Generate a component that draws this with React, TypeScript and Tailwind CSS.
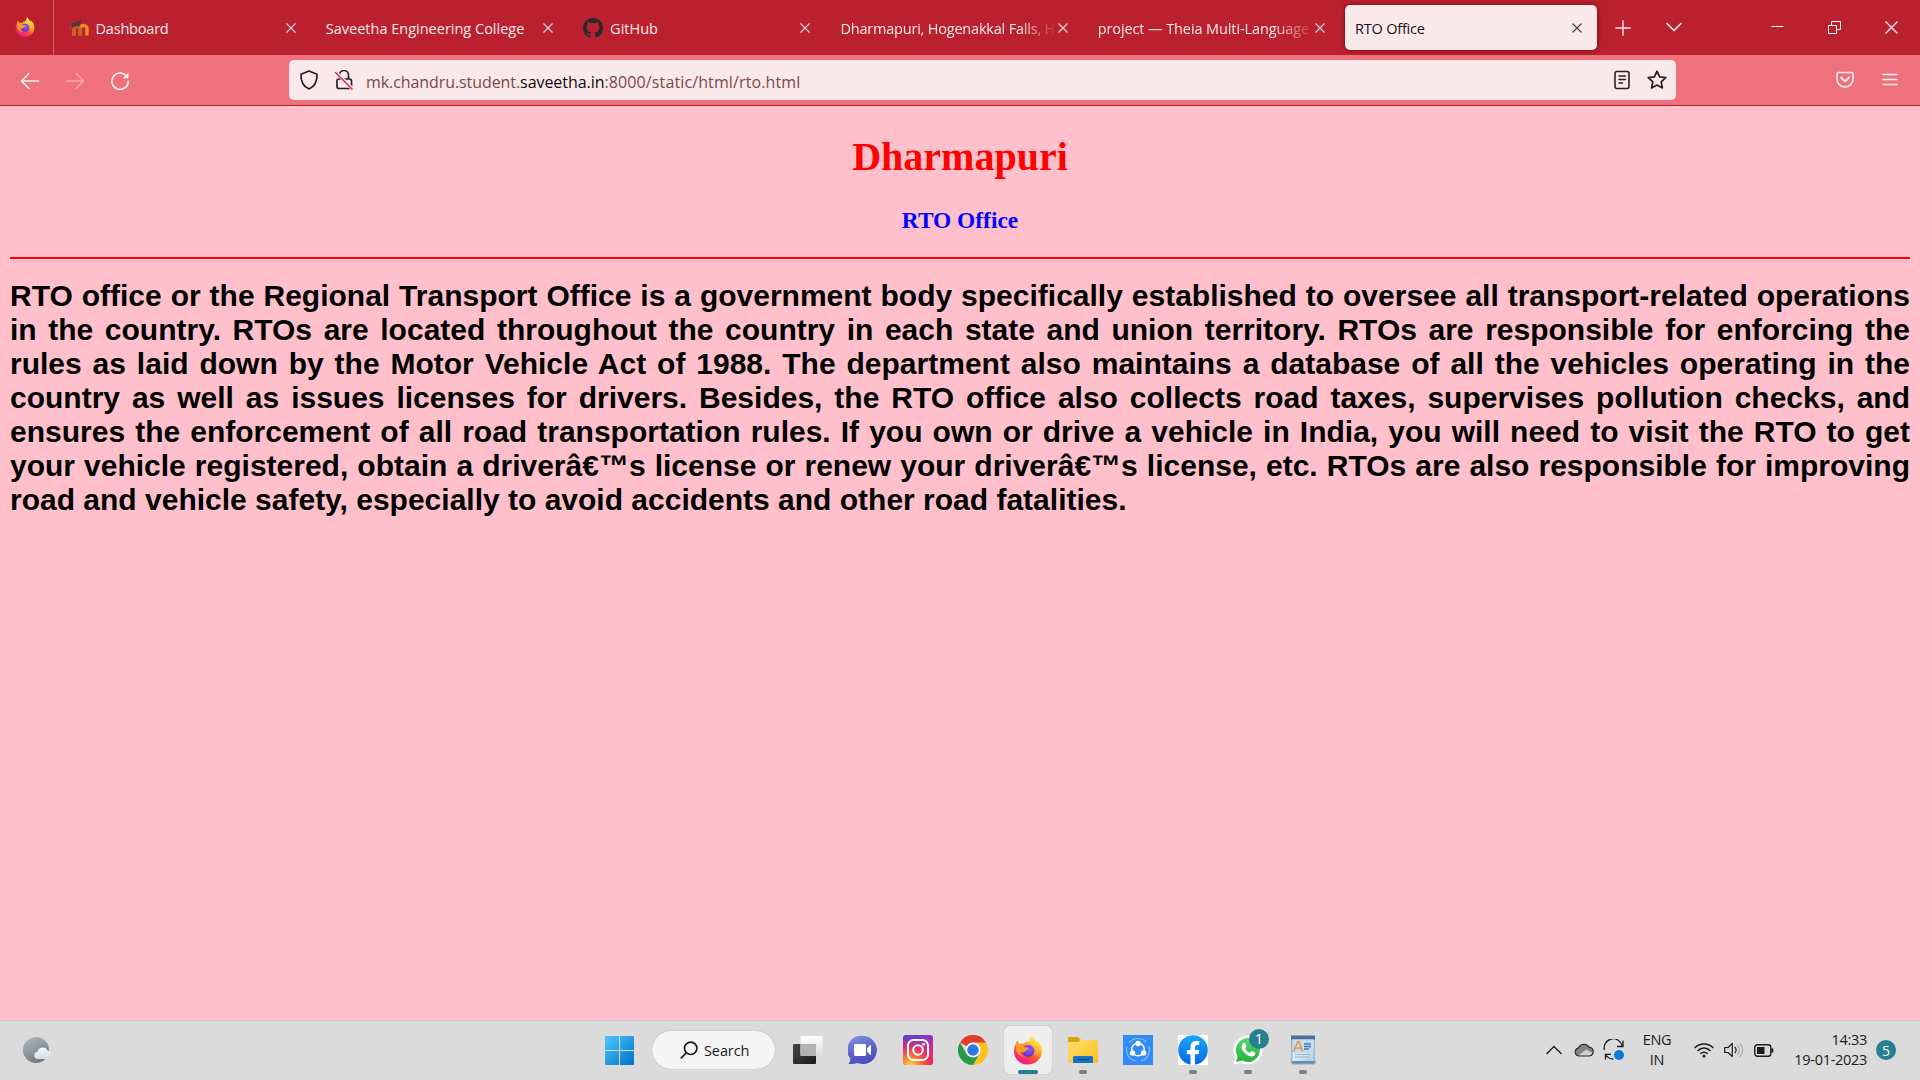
import React from "react";

type IconProps = { children: React.ReactNode; className?: string; box?: string };

function Glyph({ children, className = "size-5", box = "0 0 20 20" }: IconProps) {
  return (
    <svg viewBox={box} className={`shrink-0 ${className}`} fill="none" stroke="currentColor" strokeWidth={1.4} strokeLinecap="round" strokeLinejoin="round">
      {children}
    </svg>
  );
}

function Firefox({ id, className }: { id: string; className: string }) {
  return (
    <svg viewBox="0 0 30 30" className={`shrink-0 ${className}`}>
      <defs>
        <linearGradient id={`${id}a`} x1="0.8" y1="0.1" x2="0.25" y2="0.95">
          <stop offset="0" stopColor="#fff44f" />
          <stop offset="0.35" stopColor="#ffa52a" />
          <stop offset="0.65" stopColor="#ff4a3c" />
          <stop offset="1" stopColor="#e8178f" />
        </linearGradient>
        <radialGradient id={`${id}b`} cx="0.55" cy="0.35" r="0.7">
          <stop offset="0" stopColor="#9059ff" />
          <stop offset="1" stopColor="#5b2fc4" />
        </radialGradient>
        <linearGradient id={`${id}c`} x1="0.5" y1="0" x2="0.5" y2="1">
          <stop offset="0" stopColor="#fff04c" />
          <stop offset="1" stopColor="#ffa21f" />
        </linearGradient>
      </defs>
      <path fill={`url(#${id}a)`} d="M4.500 5.500c.3 1.600 1 2.700 1.800 3.400 1.300-.4 2.700-.3 4 .2C12.500 6.500 15 6 17 6.200c-.8-2 .2-4.500 1.800-5.700.5 3 3.200 4.700 4.800 6.700.3-.6.3-1.200.2-1.800 3.400 2.600 5.400 7 5.200 11.200C28.700 24 22.500 29.600 15 29.600S1 24 1 16.200c0-2.700.8-4.800 1.500-6.200.3-1.700 1-3.300 2-4.500z" />
      <circle cx="15.300" cy="16" r="6" fill={`url(#${id}b)`} />
      <path fill={`url(#${id}c)`} d="M18.800.5c.5 3 3.200 4.700 4.800 6.700 3 3.800 3.300 9.300.6 13.400.4-4.200-1-7.700-4.200-10.200C17.200 8.300 16.200 4 18.800.5z" />
      <path fill="#ff9a26" d="M4.500 5.500c.3 1.600 1 2.700 1.800 3.400 1.300-.4 2.700-.3 4 .2-.4 1.100-.3 2.100.2 2.900 1.600.4 3.800.2 5 .7.200 1.700-1.900 2.200-2.800 3-.8.900-1.200 1.700-2.900 1.600-1 0-1.800-.4-2.300-.8.200 2.900 2 5 5 5.600-5.200.5-9.300-3.500-9.500-8C2.800 11 2.900 8 4.500 5.500z" />
    </svg>
  );
}

function Moodle() {
  return (
    <svg viewBox="0 0 20 20" className="size-5 shrink-0">
      <path d="M5 17.500v-6M11.200 17.500V10.500c0-4 6.800-4 6.800 0v7" fill="none" stroke="#f08a24" strokeWidth="3.400" />
      <path d="M5 17.500v-6c0-3 6.200-3.500 6.200-.5v6.500" fill="none" stroke="#c8602c" strokeWidth="2.800" />
      <path d="M2 6 12.500 2 10 8.500C8 7.500 6 7.800 4.500 9.300z" fill="#4b3a3a" />
      <path d="M2 6.300c-1 2-.8 3.500-.6 5" stroke="#a55a55" fill="none" strokeWidth=".7" />
    </svg>
  );
}

function GitHub() {
  return (
    <svg viewBox="0 0 16 16" className="size-5 shrink-0" fill="#24292f">
      <path d="M8 0C3.580 0 0 3.580 0 8c0 3.540 2.290 6.530 5.470 7.590.4.070.55-.17.55-.38 0-.19-.01-.82-.01-1.490-2.010.37-2.530-.49-2.690-.94-.09-.23-.48-.94-.82-1.130-.28-.15-.68-.52-.01-.53.63-.01 1.080.58 1.230.82.72 1.210 1.870.87 2.330.66.070-.52.28-.87.51-1.070-1.780-.2-3.640-.89-3.640-3.950 0-.87.31-1.590.82-2.150-.08-.2-.36-1.020.08-2.120 0 0 .67-.21 2.200.82.640-.18 1.320-.27 2-.27s1.360.09 2 .27c1.530-1.040 2.200-.82 2.200-.82.44 1.100.16 1.920.08 2.120.51.56.82 1.270.82 2.150 0 3.070-1.870 3.750-3.650 3.950.29.25.54.73.54 1.480 0 1.070-.01 1.930-.01 2.200 0 .21.15.46.55.38A8.010 8.010 0 0 0 16 8c0-4.420-3.580-8-8-8z" />
    </svg>
  );
}

function CloseX({ className = "" }: { className?: string }) {
  return (
    <svg viewBox="0 0 10 10" className={`size-2.5 shrink-0 ${className}`} stroke="currentColor" strokeWidth="1.200">
      <path d="M.5.500l9 9M9.500.500l-9 9" />
    </svg>
  );
}

type Tab = { title: string; icon?: React.ReactNode; active?: boolean; fade?: boolean; spacing: string };

const tabs: Tab[] = [
  { title: "Dashboard", icon: <Moodle />, spacing: "tracking-[-0.2px]" },
  { title: "Saveetha Engineering College", spacing: "tracking-normal" },
  { title: "GitHub", icon: <GitHub />, spacing: "tracking-normal" },
  { title: "Dharmapuri, Hogenakkal Falls, H", fade: true, spacing: "tracking-[-0.2px]" },
  { title: "project — Theia Multi-Language", fade: true, spacing: "tracking-[-0.1px]" },
  { title: "RTO Office", active: true, spacing: "tracking-[-0.2px]" },
];

function TabBar() {
  return (
    <div className="flex h-[55px] bg-[#bb202e] text-[#fbe9eb]">
      <div className="flex w-[54px] shrink-0 items-center border-r border-[#d0616b] pl-[15px] pb-0.5">
        <Firefox id="ffmenu" className="size-5" />
      </div>
      <div className="ml-[2px] flex">
        {tabs.map((tab) => (
          <div key={tab.title} className="w-[257.3px] px-[2.5px] py-[5px]">
            <div className={`flex h-[45px] items-center rounded-[5px] pr-[15px] pl-[10px] ${tab.active ? "bg-[#fae9eb] text-[#15141a] shadow-[0_0_4px_rgba(60,0,8,0.7)]" : ""}`}>
              {tab.icon && <div className="mr-[7px] flex">{tab.icon}</div>}
              <div className={`min-w-0 flex-1 pt-[2px] text-[14.500px] leading-5 whitespace-nowrap ${tab.spacing} ${tab.fade ? "[mask-image:linear-gradient(to_left,transparent_0,black_40px)]" : ""}`}>
                {tab.title}
              </div>
              <CloseX className={tab.active ? "text-[#4c4346]" : "text-[#f3cfd3]"} />
            </div>
          </div>
        ))}
      </div>
      <div className="flex flex-1 items-center justify-between pr-[22px] pl-[15px]">
        <div className="flex items-center gap-[35px]">
          <Glyph className="size-4" box="0 0 16 16"><path d="M8 .8v14.400M.8 8h14.400" /></Glyph>
          <Glyph className="size-4" box="0 0 16 16"><path d="m1 3.500 7 7 7-7" strokeWidth={1.700} /></Glyph>
        </div>
        <div className="flex items-center gap-[44px] text-white">
          <svg viewBox="0 0 13 13" className="w-[13px]" stroke="currentColor"><path d="M.5 5.500h12" /></svg>
          <svg viewBox="0 0 13 13" className="w-[13px]" fill="none" stroke="currentColor"><path d="M.5 4.500h8v8h-8zM3.500 4V.500h9v8H9" /></svg>
          <svg viewBox="0 0 13 13" className="w-[13px]" stroke="currentColor" strokeWidth="1.100"><path d="m.5.500 12 12M12.500.500l-12 12" /></svg>
        </div>
      </div>
    </div>
  );
}

function Toolbar() {
  return (
    <div className="flex h-[51px] items-start border-b border-[#bb202e] bg-[#f0717e] text-[#fff0f2]">
      <div className="flex h-[50px] w-[289px] shrink-0 items-center gap-[25px] pt-px pl-[20px]">
        <Glyph><path d="M18.500 10h-17M9 2.500 1.500 10 9 17.500" strokeWidth={1.600} /></Glyph>
        <Glyph className="size-5 opacity-40"><path d="M1.500 10h17M11 2.500l7.500 7.500-7.500 7.500" strokeWidth={1.600} /></Glyph>
        <Glyph>
          <path d="M16.600 5.200a8.200 8.200 0 1 0 1.700 5.200" strokeWidth={1.700} />
          <path d="M18.500 1.500v5.700h-5.700z" fill="currentColor" stroke="none" />
        </Glyph>
      </div>
      <div className="mt-[5px] flex h-[40px] w-[1387px] shrink-0 items-center rounded-[5px] bg-[#fae9eb] pr-[9px] pl-[10px] text-[#252025]">
        <Glyph className="size-5"><path d="M10 1 18 4.200c.3 6-2 12-8 14.800-6-2.800-8.300-8.800-8-14.800z" strokeWidth={1.700} /></Glyph>
        <Glyph className="ml-[15px] size-5">
          <path d="M5.500 8.500V5a4.500 4.500 0 0 1 9 0v3.500M5 9h10.500a2 2 0 0 1 2 2v5.500a2 2 0 0 1-2 2H5a2 2 0 0 1-2-2V11a2 2 0 0 1 2-2z" strokeWidth={1.700} />
          <path d="M1.500 2 18 18.500" stroke="#fae9eb" strokeWidth={3.500} />
          <path d="M1.500 2.500 18 19" stroke="#e22850" strokeWidth={1.500} />
        </Glyph>
        <div className="ml-[12px] flex-1 pt-[3px] text-[16px] leading-6 tracking-[-0.08px] whitespace-nowrap text-[#80454d]">
          mk.chandru.student.<span className="tracking-[-0.05px] text-[#0c0a0c]">saveetha.in</span><span className="tracking-[0.12px]">:8000/static/html/rto.html</span>
        </div>
        <Glyph>
          <rect x="3" y="1.500" width="14" height="17" rx="2" strokeWidth={1.600} />
          <path d="M7 6h6.500M7 9.500h6.500M7 13h3.500" strokeWidth={1.400} />
        </Glyph>
        <Glyph className="ml-[15px] size-5"><path d="m10 1.200 2.600 5.700 6.200.7-4.600 4.200 1.200 6.200-5.400-3-5.400 3 1.200-6.200L1.200 7.600l6.200-.7z" strokeWidth={1.700} /></Glyph>
      </div>
      <div className="flex h-[50px] flex-1 items-center justify-end gap-[28px] pr-[22px]">
        <Glyph className="size-[18px]" box="0 0 18 18">
          <path d="M2.500 1.500h13a1.500 1.500 0 0 1 1.500 1.500v5a8 8 0 0 1-16 0V3a1.500 1.500 0 0 1 1.500-1.500z" strokeWidth={1.600} />
          <path d="m5 6.500 4 4 4-4" strokeWidth={1.800} />
        </Glyph>
        <Glyph className="size-4" box="0 0 16 16"><path d="M1 2.500h14M1 7.500h14M1 12.500h14" strokeWidth={1.500} /></Glyph>
      </div>
    </div>
  );
}

const lines = [
  "RTO office or the Regional Transport Office is a government body specifically established to oversee all transport-related operations",
  "in the country. RTOs are located throughout the country in each state and union territory. RTOs are responsible for enforcing the",
  "rules as laid down by the Motor Vehicle Act of 1988. The department also maintains a database of all the vehicles operating in the",
  "country as well as issues licenses for drivers. Besides, the RTO office also collects road taxes, supervises pollution checks, and",
  "ensures the enforcement of all road transportation rules. If you own or drive a vehicle in India, you will need to visit the RTO to get",
  "your vehicle registered, obtain a driverâ€™s license or renew your driverâ€™s license, etc. RTOs are also responsible for improving",
];

function Page() {
  return (
    <main className="h-[914px] bg-[#ffc0cb] px-[10px] pt-[28px] font-bold">
      <h1 className="text-center font-['Liberation_Serif',serif] text-[40px] leading-[46px] text-[#ff0000]">Dharmapuri</h1>
      <h3 className="mt-[27px] text-center font-['Liberation_Serif',serif] text-[23.400px] leading-[27px] text-[#0000ff]">RTO Office</h3>
      <hr className="mt-[23px] border-0 border-t-2 border-[#ff0000]" />
      <div className="mt-[20px] font-['Liberation_Sans',sans-serif] text-[30px] leading-[34px] text-black">
        {lines.map((line) => (
          <div key={line} className="[text-align-last:justify] whitespace-nowrap">{line}</div>
        ))}
        <div>road and vehicle safety, especially to avoid accidents and other road fatalities.</div>
      </div>
    </main>
  );
}

function Taskbar() {
  return (
    <footer className="grid h-[60px] grid-cols-[605px_1fr_auto] border-t border-[#c9c6c6] bg-[#dadbda] text-[#1c1c1c]">
      <div className="flex h-[58px] items-center pl-[22px]">
        <svg viewBox="0 0 30 28" className="w-[30px]">
          <defs>
            <linearGradient id="moon" x1="0.2" y1="0" x2="0.7" y2="1"><stop stopColor="#aeb6c0" /><stop offset="1" stopColor="#6d757f" /></linearGradient>
            <linearGradient id="mooncloud" x1="0" y1="0" x2="0" y2="1"><stop stopColor="#f6f8fa" /><stop offset="1" stopColor="#d3dae0" /></linearGradient>
          </defs>
          <circle cx="14" cy="14" r="13" fill="url(#moon)" />
          <path d="M16 23a3.600 3.600 0 0 1-.3-7.200 5.200 5.200 0 0 1 9.800-1.300A4.300 4.300 0 0 1 25.500 23z" fill="url(#mooncloud)" />
        </svg>
      </div>

      <div className="flex h-[58px] items-center">
        <svg viewBox="0 0 29 29" className="w-[29px] shrink-0">
          <defs><linearGradient id="win" x1="0" y1="0" x2="1" y2="1"><stop stopColor="#4cc9fb" /><stop offset="1" stopColor="#0070cc" /></linearGradient></defs>
          <path d="M1 0h13v14H0V1a1 1 0 0 1 1-1zM15 0h13a1 1 0 0 1 1 1v13H15zM0 15h14v14H1a1 1 0 0 1-1-1zM15 15h14v13a1 1 0 0 1-1 1H15z" fill="url(#win)" />
        </svg>
        <div className="ml-[18px] flex h-[38px] w-[123px] shrink-0 items-center rounded-full bg-[#f5f5f5] pl-[28px] shadow-[0_0_1px_rgba(0,0,0,0.35)]">
          <svg viewBox="0 0 18 18" className="w-[18px]" fill="none" stroke="#1c1c1c" strokeWidth="1.700"><circle cx="10.700" cy="7.300" r="6.200" /><path d="m6.300 11.800-5.500 5.500" /></svg>
          <span className="ml-[6px] pt-px text-[14.500px] tracking-[-0.1px]">Search</span>
        </div>

        <svg viewBox="0 0 30 30" className="ml-[18px] w-[30px] shrink-0">
          <defs>
            <linearGradient id="tvdark" x1="0" y1="0" x2="1" y2="1"><stop stopColor="#444440" /><stop offset="1" stopColor="#1b1b19" /></linearGradient>
            <linearGradient id="tvlight" x1="0" y1="0" x2="0" y2="1"><stop stopColor="#ffffff" /><stop offset="1" stopColor="#dcdcdc" /></linearGradient>
          </defs>
          <rect y="9" width="23" height="20" rx="1" fill="url(#tvdark)" />
          <rect x="7.500" y="1" width="22" height="20" rx="1" fill="url(#tvlight)" />
          <path d="M7.500 9H23v12H8.500a1 1 0 0 1-1-1z" fill="#b2b2b0" />
        </svg>

        <svg viewBox="0 0 30 30" className="ml-[25px] w-[30px] shrink-0">
          <defs><linearGradient id="chat" x1="0.2" y1="0" x2="0.6" y2="1"><stop stopColor="#8391de" /><stop offset="0.600" stopColor="#5a5bc8" /><stop offset="1" stopColor="#4c4bbd" /></linearGradient></defs>
          <path d="M15 1a14 14 0 1 1-5.500 26.900C6.500 29 3 29.300.5 28.700c1.500-2 2-3.200 1.700-5.200A14 14 0 0 1 15 1z" fill="url(#chat)" />
          <rect x="6" y="9" width="12" height="12" rx="1.300" fill="#fff" />
          <path d="m19 13.500 3-3.300c.5-.4 1-.2 1 .5v8.600c0 .7-.5.900-1 .5l-3-3.300z" fill="#fff" />
        </svg>

        <svg viewBox="0 0 30 30" className="ml-[25px] w-[30px] shrink-0">
          <defs>
            <linearGradient id="iga" x1="0.6" y1="0" x2="0.9" y2="1"><stop stopColor="#6a3ec6" /><stop offset="0.450" stopColor="#cf2897" /><stop offset="1" stopColor="#e82c62" /></linearGradient>
            <radialGradient id="igb" cx="0.25" cy="1.050" r="0.950"><stop stopColor="#ffdc5a" /><stop offset="0.300" stopColor="#ff8a30" /><stop offset="0.700" stopColor="#f0304a" stopOpacity="0.700" /><stop offset="1" stopColor="#d02a90" stopOpacity="0" /></radialGradient>
          </defs>
          <rect width="30" height="30" rx="3" fill="url(#iga)" />
          <rect width="30" height="30" rx="3" fill="url(#igb)" />
          <g fill="none" stroke="#fff" strokeWidth="2"><rect x="5" y="5" width="20" height="20" rx="5.500" /><circle cx="15" cy="15" r="4.800" /></g>
          <circle cx="20.700" cy="9.300" r="1.400" fill="#fff" />
        </svg>

        <svg viewBox="0 0 48 48" className="ml-[25px] w-[30px] shrink-0">
          <path d="M24 24 3.200 12A24 24 0 0 1 44.800 12z" fill="#e33b2e" />
          <path d="M24 12h20.800A24 24 0 0 1 24 48l10.400-18z" fill="#fcc31e" />
          <path d="M13.600 30 3.200 12A24 24 0 0 0 24 48l10.400-18z" fill="#279847" />
          <circle cx="24" cy="24" r="12" fill="#fff" />
          <circle cx="24" cy="24" r="9.300" fill="#2e79ea" />
        </svg>

        <div className="relative ml-4 flex size-12 shrink-0 items-center justify-center rounded-[5px] bg-[#eeeeee] shadow-[0_0_1px_rgba(0,0,0,0.35)]">
          <Firefox id="fftask" className="size-[30px]" />
          <span className="absolute bottom-0 h-1 w-5 rounded-full bg-[#27808f]" />
        </div>

        <div className="relative ml-4 flex h-12 w-[30px] shrink-0 items-center justify-center">
          <svg viewBox="0 0 30 30" className="w-[30px]">
            <defs>
              <linearGradient id="folder" x1="0" y1="0" x2="1" y2="1"><stop stopColor="#ffdf70" /><stop offset="1" stopColor="#fabf21" /></linearGradient>
            </defs>
            <path d="M0 3a1 1 0 0 1 1-1h9l3 3h-1v5H0z" fill="#dda30d" />
            <path d="M0 7h10l3-2h16a1 1 0 0 1 1 1v22H0z" fill="url(#folder)" />
            <path d="M5 28v-5.500A1.500 1.500 0 0 1 6.500 21h17a1.500 1.500 0 0 1 1.500 1.500V28z" fill="#1276c4" />
            <path d="M9 24.500h12" stroke="#084a80" strokeWidth="1.200" />
          </svg>
          <span className="absolute bottom-0 h-1 w-2 rounded-full bg-[#7d7d7d]" />
        </div>

        <svg viewBox="0 0 30 30" className="ml-[25px] w-[30px] shrink-0">
          <rect width="30" height="30" fill="#338bfb" />
          <circle cx="15" cy="15" r="11.500" fill="none" stroke="#8dc0ff" strokeWidth="1.100" strokeDasharray="19 5" strokeDashoffset="4" />
          <circle cx="15" cy="14.500" r="6.300" fill="none" stroke="#fff" strokeWidth="1.500" />
          <g fill="#fff"><circle cx="15" cy="8.500" r="2.700" /><circle cx="9.500" cy="18" r="2.700" /><circle cx="20.500" cy="18" r="2.700" /></g>
        </svg>

        <div className="relative ml-[25px] flex h-12 w-[30px] shrink-0 items-center justify-center">
          <svg viewBox="0 0 30 30" className="w-[30px]">
            <defs><linearGradient id="fb" x1="0" y1="0" x2="0" y2="1"><stop stopColor="#18a6fc" /><stop offset="1" stopColor="#0668e4" /></linearGradient></defs>
            <rect width="30" height="30" fill="#fff" />
            <circle cx="15" cy="15" r="14.800" fill="url(#fb)" />
            <path d="M12.500 30V19.300H8.800V15h3.700v-3c0-4 2.300-6 5.800-6 1.200 0 2.400.2 3 .3v3.600h-1.900c-1.900 0-2.400 1-2.400 2.300V15h4.200l-.7 4.300H17V30z" fill="#fff" />
          </svg>
          <span className="absolute bottom-0 h-1 w-2 rounded-full bg-[#7d7d7d]" />
        </div>

        <div className="relative ml-[25px] flex h-12 w-[30px] shrink-0 items-center justify-center">
          <svg viewBox="0 0 30 30" className="w-[30px]">
            <defs><linearGradient id="wa" x1="0" y1="0" x2="0" y2="1"><stop stopColor="#5cd66c" /><stop offset="1" stopColor="#27b13e" /></linearGradient></defs>
            <path d="M.3 29.700l2-7.500A14.500 14.500 0 1 1 8 27.800z" fill="#fff" />
            <path d="M3 27l1.600-5.600A12 12 0 1 1 9 25.600z" fill="url(#wa)" />
            <path d="M10.300 8.200c.7-.7 1.500-.5 1.800.1l1.200 2.800c.2.600-.1 1-1.200 2.300 1.200 2.200 2.800 3.500 5 4.400 1.300-1.600 1.500-2 2.100-1.700l2.800 1.400c.7.400.2 2.400-.8 3.200-2.300 1.800-5.800.3-8.300-1.700-2.100-1.800-4.200-4.400-4.300-7 0-1.600.7-2.900 1.700-3.800z" fill="#fff" />
          </svg>
          <span className="absolute top-[3px] left-[16px] flex size-5 items-center justify-center rounded-full bg-[#27808f] text-[14px] leading-none text-white">1</span>
          <span className="absolute bottom-0 h-1 w-2 rounded-full bg-[#7d7d7d]" />
        </div>

        <div className="relative ml-[25px] flex h-12 w-[30px] shrink-0 items-center justify-center">
          <svg viewBox="0 0 30 30" className="w-[30px]">
            <defs><linearGradient id="wp" x1="0" y1="0" x2="0.6" y2="1"><stop stopColor="#a9cde9" /><stop offset="0.600" stopColor="#dcecf7" /><stop offset="1" stopColor="#b4d2ea" /></linearGradient></defs>
            <path d="M3.500 2h23l-.5 21 1.500 4.500-1 1.500h-22L3 27l1-4z" fill="url(#wp)" stroke="#7d9dba" strokeWidth=".8" />
            <path d="M3 .5h24v4H3z" fill="#4d7096" />
            <path d="M3.500 26h23.500l-1 2.700H4.500z" fill="#6b8fb3" />
            <path d="M5 4.500h20V18H5z" fill="#c3dcf0" />
            <path d="m5.500 16.500 4.500-10h1l3.500 10M7.500 13h5.500" fill="none" stroke="#f0913c" strokeWidth="1.500" />
            <path d="M16 9h7M16 11.500h7M16 14h5" stroke="#4778b5" strokeWidth="1.300" />
            <path d="M7 19.500h15M7 22h15" stroke="#a3b4c3" />
          </svg>
          <span className="absolute bottom-0 h-1 w-2 rounded-full bg-[#7d7d7d]" />
        </div>
      </div>

      <div className="flex h-[58px] items-center pr-[24px]">
        <svg viewBox="0 0 16 10" className="w-4" fill="none" stroke="currentColor" strokeWidth="1.400"><path d="m.5 9 7.500-7.500L15.500 9" /></svg>
        <svg viewBox="0 0 20 14" className="ml-[12px] w-5">
          <path d="M5 13a4 4 0 0 1-.6-7.900 6 6 0 0 1 10.600-1A4.500 4.500 0 0 1 15.500 13z" fill="#858585" />
          <path d="M4 13l8-6.500L19 10c0 2-1.500 3-3.500 3z" fill="#cfcfcf" />
          <path d="M5 13a4 4 0 0 1-.6-7.900 6 6 0 0 1 10.600-1A4.500 4.500 0 0 1 15.500 13z" fill="none" stroke="#2b2b2b" strokeWidth="1.200" />
        </svg>
        <svg viewBox="0 0 22 22" className="ml-[9px] w-[22px]" fill="none" stroke="currentColor" strokeWidth="1.300">
          <path d="M1.500 11A9 9 0 0 1 19 6.500M20 1.500v6h-6M2.500 20.500v-5.200h5.500M2.500 15.500c1.800 3 4.500 4.500 8 4.500" />
          <circle cx="16" cy="16" r="5" fill="#0a7bdd" stroke="none" />
        </svg>
        <div className="ml-[15px] w-[34px] text-center text-[14.500px] leading-5 tracking-[-0.3px]">ENG<br />IN</div>
        <svg viewBox="0 0 20 16" className="ml-[20px] w-5" fill="none" stroke="currentColor" strokeWidth="1.500">
          <path d="M.7 6a13 13 0 0 1 18.600 0M3.500 8.900a9 9 0 0 1 13 0M6.300 11.700a5.200 5.200 0 0 1 7.400 0" />
          <circle cx="10" cy="14" r="1.500" fill="currentColor" stroke="none" />
        </svg>
        <svg viewBox="0 0 20 16" className="ml-[10px] w-5" fill="none" stroke="currentColor" strokeWidth="1.200">
          <path d="M.7 5.500H4L8.300 1.500v13L4 10.500H.7z" strokeLinejoin="round" />
          <path d="M10.800 5a4.500 4.500 0 0 1 0 6" />
          <path d="M13.300 3a7 7 0 0 1 0 10M15.800 1a10 10 0 0 1 0 14" stroke="#aaa" />
        </svg>
        <svg viewBox="0 0 20 13" className="ml-[10px] w-5" fill="none" stroke="currentColor" strokeWidth="1.400">
          <rect x=".8" y=".8" width="16" height="11.400" rx="2.500" />
          <rect x="3" y="3" width="7.500" height="7" fill="currentColor" stroke="none" />
          <path d="M18.300 4.500v4" strokeWidth="2" />
        </svg>
        <div className="ml-[19px] w-[74px] text-right text-[14.500px] leading-5 tracking-[-0.3px] whitespace-nowrap">14:33<br />19-01-2023</div>
        <span className="ml-[9px] flex size-5 items-center justify-center rounded-full bg-[#27808f] pt-px text-[14px] leading-none text-white">5</span>
      </div>
    </footer>
  );
}

export default function App() {
  return (
    <div className="flex h-[1080px] w-[1920px] flex-col overflow-hidden bg-[#ffc0cb] font-['Open_Sans','Noto_Sans',sans-serif]">
      <TabBar />
      <Toolbar />
      <Page />
      <Taskbar />
    </div>
  );
}
